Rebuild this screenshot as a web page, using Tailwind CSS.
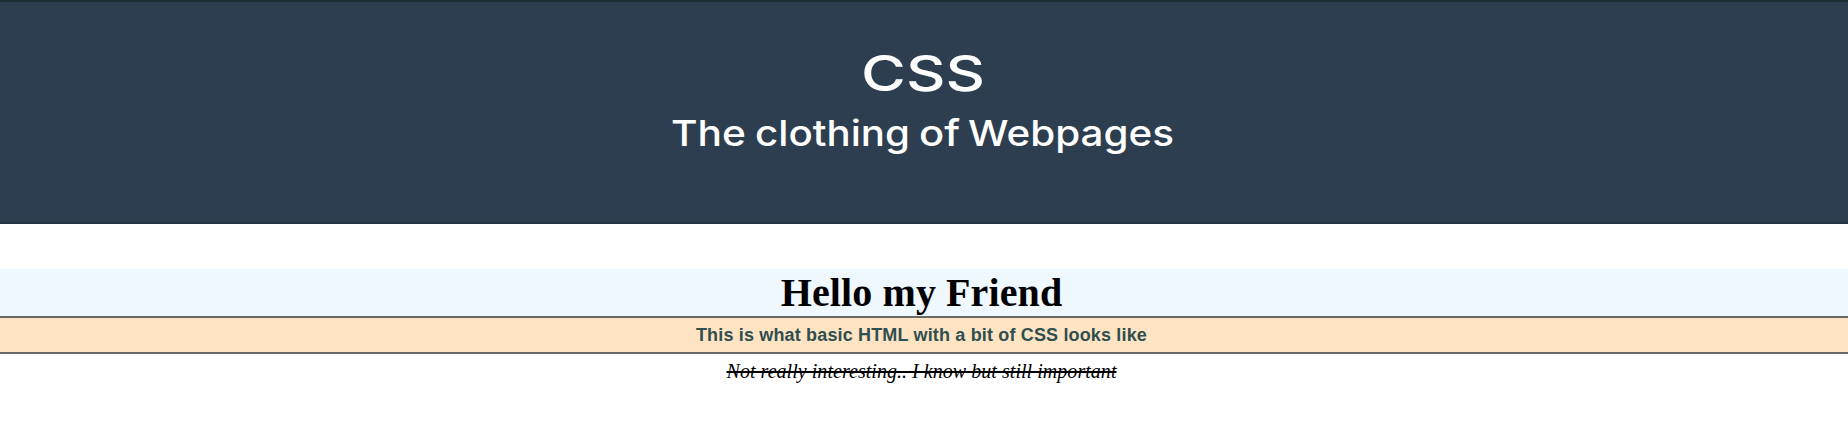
<!DOCTYPE html>
<html lang="en"><head><meta charset="utf-8"><title>CSS</title>
<script src="https://cdn.jsdelivr.net/npm/@tailwindcss/browser@4"></script></head>
<body class="bg-white overflow-hidden h-[446px]">
<header class="h-[224px] pr-[3px] bg-[#2d3e50] border-y-2 border-t-[#1e2c33] border-b-[#263845] text-white font-['Inter',sans-serif] font-medium flex flex-col items-center">
<h1 class="mt-[39px] h-[62px]"><svg class="block overflow-visible" width="119" height="62" fill="currentColor"><text x="-2" y="50" font-size="49" textLength="124" lengthAdjust="spacingAndGlyphs">CSS</text></svg></h1>
<h2><svg class="block overflow-visible" width="501" height="50" fill="currentColor" font-size="36"><text x="-1" y="43" textLength="75" lengthAdjust="spacingAndGlyphs">The</text><text x="83" y="43" textLength="155" lengthAdjust="spacingAndGlyphs">clothing</text><text x="247" y="43" textLength="41" lengthAdjust="spacingAndGlyphs">of</text><text x="296" y="43" textLength="206" lengthAdjust="spacingAndGlyphs">Webpages</text></svg></h2>
</header>
<main class="pt-[45px] text-center">
<h1 class="h-[47px] pr-[5px] bg-[#f0f8ff] text-black font-['Liberation_Serif',serif] font-bold text-[40px] leading-[47px] tracking-[0.1px]">Hello my Friend</h1>
<p class="h-[38px] pr-[5px] bg-[#ffe4c4] border-y-2 border-[#696969] text-[#2f4f4f] font-['Liberation_Sans',sans-serif] font-bold text-[18px] leading-[34px] tracking-[0.16px]">This is what basic HTML with a bit of CSS looks like</p>
<p class="pr-[5px] text-black font-['Liberation_Serif',serif] italic text-[20px] leading-[34px] tracking-[0.04px] line-through decoration-2">Not really interesting.. I know but still important</p>
</main>
</body></html>
